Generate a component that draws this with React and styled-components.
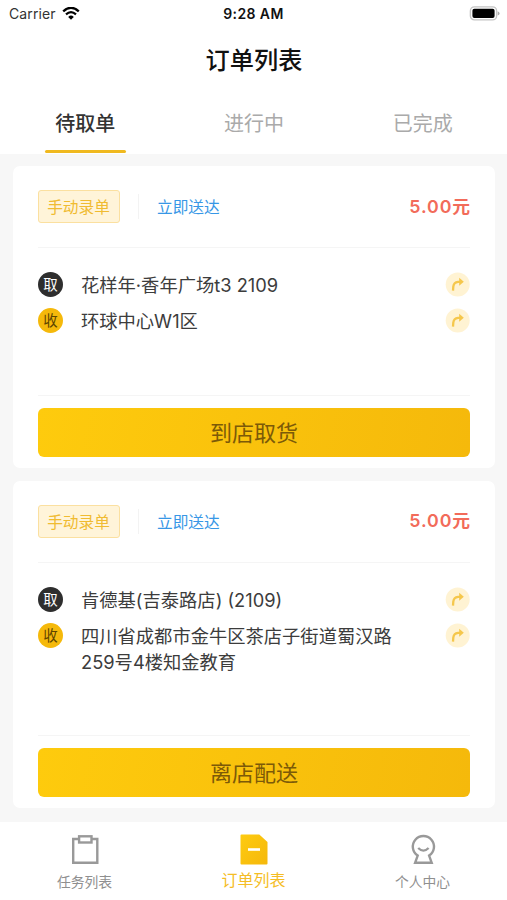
import styled, { createGlobalStyle } from "styled-components";

const GlobalStyle = createGlobalStyle`
  * {
    box-sizing: border-box;
  }
  body {
    margin: 0;
    background: #f7f7f7;
    font-family: Inter, "Noto Sans CJK SC", sans-serif;
  }
`;

const Screen = styled.div`
  display: flex;
  flex-direction: column;
  width: 507px;
  height: 900px;
  overflow: hidden;
  background: #f7f7f7;
`;

const StatusBar = styled.div`
  display: grid;
  grid-template-columns: 1fr auto 1fr;
  align-items: center;
  height: 28px;
  padding: 0 7px 0 9px;
  background: #fff;
  line-height: 20px;
`;

const Carrier = styled.div`
  display: flex;
  align-items: center;
  gap: 6px;
  color: #333;
  font-size: 14px;
  letter-spacing: 0.1px;
`;

const Time = styled.span`
  margin-left: -2px;
  color: #111;
  font-size: 14px;
  font-weight: 600;
  letter-spacing: 0.4px;
`;

const Battery = styled.svg`
  justify-self: end;
  margin-top: -2px;
`;

const Title = styled.h1`
  height: 64px;
  margin: 0;
  padding-left: 1px;
  background: #fff;
  color: #111;
  font-size: 24.2px;
  font-weight: 500;
  line-height: 65px;
  text-align: center;
`;

const Tabs = styled.div`
  display: grid;
  grid-template-columns: repeat(3, 1fr);
  height: 61.5px;
  padding-left: 1px;
  background: #fff;
`;

const Tab = styled.div`
  display: flex;
  flex-direction: column;
  align-items: center;
  color: ${(props) => (props.$active ? "#333" : "#aaa")};
  font-size: 20px;
  font-weight: ${(props) => (props.$active ? 500 : 400)};
  line-height: 65px;

  &::after {
    content: "";
    width: 81px;
    height: 3px;
    margin-top: -7px;
    border-radius: 2px;
    background: ${(props) => (props.$active ? "#f0b91f" : "transparent")};
  }
`;

const List = styled.div`
  display: flex;
  flex: 1;
  flex-direction: column;
  gap: 12.5px;
  padding: 12.5px 12px 0 13px;
`;

const Card = styled.div`
  display: flex;
  flex-direction: column;
  height: ${(props) => props.$height}px;
  padding: 0 25px 11px;
  border-radius: 7px;
  background: #fff;
`;

const CardHead = styled.div`
  display: flex;
  align-items: center;
  height: 82px;
  border-bottom: 1.5px solid #f5f5f5;
  font-size: 15.7px;
`;

const Tag = styled.span`
  width: 82px;
  height: 33px;
  padding-right: 1px;
  border: 1px solid #fbe0a0;
  border-radius: 3px;
  background: #fff4d9;
  color: #f0bb31;
  line-height: 34px;
  text-align: center;
`;

const Delivery = styled.span`
  height: 25px;
  margin-left: 18px;
  padding-left: 18px;
  border-left: 1px solid #f3f3f3;
  color: #3797e6;
  line-height: 27px;
`;

const Price = styled.span`
  margin-right: -1px;
  margin-left: auto;
  color: #f26b5a;
  font-size: 17.8px;
  font-weight: 600;
  letter-spacing: 0.9px;
  line-height: 24px;
`;

const Stops = styled.div`
  display: flex;
  flex: 1;
  flex-direction: column;
  gap: 10px;
  padding-top: 24px;
  border-bottom: 1.5px solid #f5f5f5;
`;

const Stop = styled.div`
  display: grid;
  grid-template-columns: 25px 1fr 25px;
  column-gap: 18px;
  align-items: start;
`;

const Badge = styled.span`
  width: 25px;
  height: 25px;
  border-radius: 50%;
  background: ${(props) => (props.$dark ? "#2e2e2e" : "#f5b90b")};
  color: ${(props) => (props.$dark ? "#fff" : "#5e4600")};
  font-size: 14.5px;
  line-height: 26px;
  text-align: center;
`;

const Address = styled.span`
  color: #3c3c3c;
  font-size: 18.3px;
  line-height: 26px;
  white-space: pre-line;
`;

const Action = styled.button`
  height: 49px;
  margin-top: 12px;
  padding: 0 0 3px;
  border: 0;
  border-radius: 6px;
  background: linear-gradient(100deg, #fecb0d, #f5b90b);
  color: #7c5a08;
  font-family: inherit;
  font-size: 22px;
`;

const NavBar = styled.div`
  display: grid;
  grid-template-columns: repeat(3, 1fr);
  height: 78px;
  background: #fff;
`;

const NavItem = styled.div`
  display: flex;
  flex-direction: column;
  align-items: center;
  padding-top: 12px;
  color: ${(props) => (props.$active ? "#f5bd25" : "#8f8f8f")};
  font-size: ${(props) => (props.$active ? 16 : 13.8)}px;
  line-height: ${(props) => (props.$active ? 30 : 34)}px;
`;

const WifiIcon = () => (
  <svg width="18" height="14" viewBox="0 0 18 14" fill="none">
    <path d="M1.2 4.3Q9-2.6 16.8 4.3" stroke="#000" strokeWidth="2.4" />
    <path d="M4 7.4Q9 2.8 14 7.4" stroke="#000" strokeWidth="2.2" />
    <path d="M6.2 9.9Q9 7.2 11.8 9.9L9 12.8Z" fill="#000" />
  </svg>
);

const BatteryIcon = () => (
  <Battery width="31" height="15" viewBox="0 0 31 15">
    <rect x="1.4" y="0.9" width="26.2" height="13" rx="4" fill="#fff" stroke="#c4c4c4" strokeWidth="1.4" />
    <rect x="3.4" y="2.8" width="22.2" height="9.2" rx="2" fill="#000" />
    <path d="M28.7 5.2Q30.6 6 30.6 7.4T28.7 9.6Z" fill="#aaa" />
  </Battery>
);

const RouteIcon = () => (
  <svg width="25" height="25" viewBox="0 0 25 25">
    <circle cx="12.7" cy="12.5" r="12" fill="#fff3d3" />
    <path d="M8 18.6L8.3 14.6Q8.8 10.4 13 9.9H15" fill="none" stroke="#f5c74c" strokeWidth="2.3" />
    <path d="M14.2 5.7L18.8 9.8L14.2 13.8Z" fill="#f5c74c" />
  </svg>
);

const TaskIcon = () => (
  <svg width="28" height="31" viewBox="0 0 28 31" fill="none" stroke="#999" strokeWidth="2.4">
    <path d="M7.5 5H2.2V28.8H26.3V5H21" />
    <rect x="8.1" y="2.3" width="12.4" height="6.2" />
  </svg>
);

const OrderIcon = () => (
  <svg width="28" height="31" viewBox="0 0 28 31">
    <defs>
      <linearGradient id="order" x1="0" y1="0" x2="1" y2="1">
        <stop offset="0" stopColor="#fecb10" />
        <stop offset="1" stopColor="#f5b80b" />
      </linearGradient>
    </defs>
    <path d="M1.5 0.5H19.3L27.5 8V29.5A1 1 0 0 1 26.5 30.5H1.5A1 1 0 0 1 0.5 29.5V1.5A1 1 0 0 1 1.5 0.5Z" fill="url(#order)" />
    <path d="M8 15.5H20" stroke="#fff" strokeWidth="2.6" />
  </svg>
);

const ProfileIcon = () => (
  <svg width="28" height="31" viewBox="0 0 28 31" fill="none" stroke="#999" strokeWidth="2.4">
    <path d="M8.7 21.6A10.6 10.6 0 1 1 20.1 21.6L22.7 28.8H6.1Z" />
    <path d="M9.2 14Q14.4 19.2 19.6 14" />
  </svg>
);

const orders = [
  {
    from: "花样年·香年广场t3 2109",
    to: "环球中心W1区",
    action: "到店取货",
    height: 302,
  },
  {
    from: "肯德基(吉泰路店) (2109)",
    to: "四川省成都市金牛区茶店子街道蜀汉路\n259号4楼知金教育",
    action: "离店配送",
    height: 327.5,
  },
];

function OrderCard({ order }) {
  return (
    <Card $height={order.height}>
      <CardHead>
        <Tag>手动录单</Tag>
        <Delivery>立即送达</Delivery>
        <Price>5.00元</Price>
      </CardHead>
      <Stops>
        <Stop>
          <Badge $dark>取</Badge>
          <Address>{order.from}</Address>
          <RouteIcon />
        </Stop>
        <Stop>
          <Badge>收</Badge>
          <Address>{order.to}</Address>
          <RouteIcon />
        </Stop>
      </Stops>
      <Action>{order.action}</Action>
    </Card>
  );
}

export default function App() {
  return (
    <Screen>
      <GlobalStyle />
      <StatusBar>
        <Carrier>
          Carrier
          <WifiIcon />
        </Carrier>
        <Time>9:28 AM</Time>
        <BatteryIcon />
      </StatusBar>
      <Title>订单列表</Title>
      <Tabs>
        <Tab $active>待取单</Tab>
        <Tab>进行中</Tab>
        <Tab>已完成</Tab>
      </Tabs>
      <List>
        {orders.map((order) => (
          <OrderCard key={order.action} order={order} />
        ))}
      </List>
      <NavBar>
        <NavItem>
          <TaskIcon />
          任务列表
        </NavItem>
        <NavItem $active>
          <OrderIcon />
          订单列表
        </NavItem>
        <NavItem>
          <ProfileIcon />
          个人中心
        </NavItem>
      </NavBar>
    </Screen>
  );
}
